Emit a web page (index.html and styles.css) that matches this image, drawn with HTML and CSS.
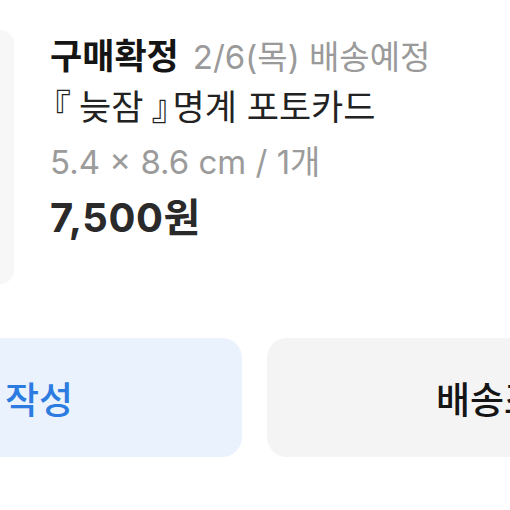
FILE: index.html
```html
<!DOCTYPE html>
<html lang="ko">
<head>
<meta charset="utf-8">
<link rel="stylesheet" href="styles.css">
</head>
<body>
<div class="page">
  <div class="item">
    <div class="thumb"></div>
    <div class="info">
      <div class="status"><span class="confirm">구매확정</span><span class="date">2/6(목) 배송예정</span></div>
      <div class="name"><span class="br open">『</span>늦잠<span class="br close">』</span>명계 포토카드</div>
      <div class="opt">5.4 × 8.6 cm / 1개</div>
      <div class="price">7,500원</div>
    </div>
  </div>
  <div class="actions">
    <button class="btn review">리뷰 작성</button>
    <button class="btn track">배송조회</button>
  </div>
</div>
</body>
</html>
```

FILE: styles.css
```css
html, body {
  margin: 0;
  padding: 0;
  background: #ffffff;
}
body {
  font-family: "Inter", "Noto Sans CJK KR", sans-serif;
  overflow: hidden;
}
.page {
  width: 510px;
  height: 510px;
  overflow: hidden;
}
.item {
  display: flex;
  gap: 36px;
  margin-left: -240px;
  padding-top: 30px;
}
.thumb {
  flex: none;
  width: 254px;
  height: 254px;
  border-radius: 14px;
  background: #f7f7f7;
}
.info {
  display: flex;
  flex-direction: column;
  white-space: nowrap;
}
.status {
  line-height: 44px;
  margin-top: 4px;
  display: flex;
  gap: 14px;
  align-items: baseline;
}
.confirm {
  font-size: 35px;
  font-weight: 700;
  color: #151515;
}
.date {
  font-size: 33px;
  color: #9a9a9a;
}
.name {
  font-size: 35px;
  line-height: 44px;
  margin-top: 6px;
  color: #222222;
}
.br {
  display: inline-block;
}
.br.open {
  margin-left: -14px;
  margin-right: 8px;
}
.br.close {
  margin-left: 8px;
  margin-right: -14px;
}
.opt {
  font-size: 33px;
  line-height: 44px;
  margin-top: 11px;
  color: #9b9b9b;
}
.price {
  font-size: 40px;
  line-height: 48px;
  margin-top: 10px;
  font-weight: 700;
  letter-spacing: 0.5px;
  color: #2a2a2a;
}
.actions {
  display: flex;
  gap: 25px;
  margin-left: -238px;
  margin-top: 54px;
}
.btn {
  flex: none;
  width: 480px;
  height: 119px;
  border: none;
  border-radius: 20px;
  font-family: "Inter", "Noto Sans CJK KR", sans-serif;
  font-size: 37px;
  font-weight: 500;
  padding: 0;
}
.review {
  background: #e9f2fd;
  color: #2b7be0;
  text-indent: -4px;
}
.track {
  background: #f4f4f5;
  color: #151515;
  text-indent: -6px;
}
```
